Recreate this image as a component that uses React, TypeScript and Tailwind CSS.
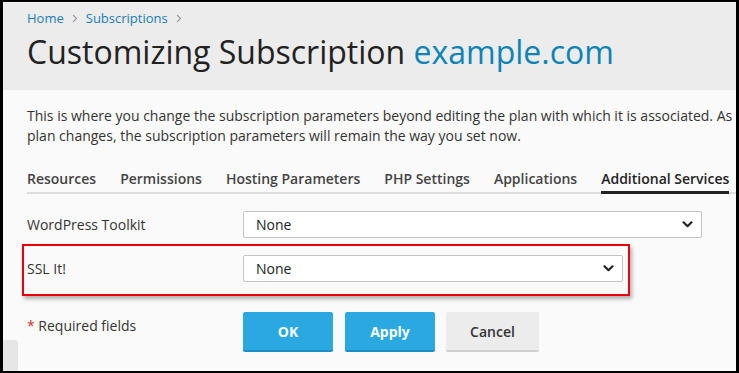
import React from "react";

const font = { fontFamily: '"Open Sans", "Noto Sans", Arial, sans-serif' };

const Chevron = () => (
  <svg width="11" height="7" viewBox="0 0 11 7" className="shrink-0">
    <path d="M1.5 1.3 L5.5 5.2 L9.5 1.3" fill="none" stroke="#222" strokeWidth="2.2" strokeLinecap="round" strokeLinejoin="round" />
  </svg>
);

const Crumb = () => (
  <svg width="6" height="9" viewBox="0 0 6 9" className="shrink-0">
    <path d="M1 1 L4.5 4.5 L1 8" fill="none" stroke="#9a9a9a" strokeWidth="1.1" />
  </svg>
);

const Select = ({ width }: { width: string }) => (
  <div
    className={`${width} h-[27px] flex items-center justify-between pl-[12px] pr-[8px] bg-white border border-[#c4c4c4] rounded-[2px] text-[14px] text-[#222]`}
  >
    <span>None</span>
    <Chevron />
  </div>
);

const tabs = [
  "Resources",
  "Permissions",
  "Hosting Parameters",
  "PHP Settings",
  "Applications",
  "Additional Services",
];

export default function App() {
  return (
    <div className="w-[739px] h-[373px] bg-black pt-[2px] pl-[3px] pr-[3px] pb-[2px]" style={font}>
      <div className="relative w-full h-full bg-[#fafafa] overflow-hidden">
        {/* Header */}
        <header className="h-[88px] bg-[#ececec] border-t border-[#f4f4f4] pl-[24px] pt-[6px]">
          <nav className="flex items-center text-[13px] leading-[18px]">
            <span className="text-[#1a7db8]">Home</span>
            <span className="mx-[8px] flex"><Crumb /></span>
            <span className="text-[#1a7db8]">Subscriptions</span>
            <span className="ml-[8px] flex"><Crumb /></span>
          </nav>
          <h1 className="mt-[3px] text-[32px] leading-[44px] text-[#222] whitespace-nowrap">
            Customizing Subscription <span className="text-[#0c84b5]">example.com</span>
          </h1>
        </header>

        {/* Content */}
        <div className="pl-[24px]">
          <p className="mt-[16px] text-[14px] leading-[20px] text-[#333] whitespace-nowrap">
            This is where you change the subscription parameters beyond editing the plan with which it is associated. As
            <br />
            plan changes, the subscription parameters will remain the way you set now.
          </p>

          {/* Tabs */}
          <div className="mt-[23px] flex gap-[24px] border-b-2 border-[#dddddd] whitespace-nowrap">
            {tabs.map((t, i) => (
              <div
                key={t}
                className={`pb-[2px] -mb-[2px] border-b-[3px] text-[14px] leading-[20px] font-semibold ${
                  i === tabs.length - 1 ? "border-[#222] text-[#222]" : "border-transparent text-[#444]"
                }`}
              >
                {t}
              </div>
            ))}
          </div>

          {/* Form */}
          <div className="mt-[17px] flex items-center">
            <label className="w-[216px] text-[14px] leading-[20px] text-[#333]">WordPress Toolkit</label>
            <Select width="w-[459px]" />
          </div>

          <div className="mt-[6px] -ml-[5px] w-[608px] border-2 border-[#e8000b] pl-[3px] pt-[9px] pb-[12px] shadow-[2px_3px_4px_rgba(0,0,0,0.3)] flex items-center">
            <label className="w-[216px] text-[14px] leading-[20px] text-[#333]">SSL It!</label>
            <Select width="w-[380px]" />
          </div>

          <div className="mt-[16px] flex items-start">
            <div className="w-[216px] pt-[4px] text-[14px] leading-[20px] text-[#333]">
              <span className="text-[#d9342b]">*</span> Required fields
            </div>
            <button className="w-[90px] h-[40px] rounded-[2px] bg-[#29a9df] border-b-2 border-[#1c8cc2] text-white text-[14px] font-bold">
              OK
            </button>
            <button className="ml-[12px] w-[90px] h-[40px] rounded-[2px] bg-[#29a9df] border-b-2 border-[#1c8cc2] text-white text-[14px] font-bold">
              Apply
            </button>
            <button className="ml-[11px] w-[93px] h-[40px] rounded-[2px] bg-[#ececec] border-b-2 border-[#cfcfcf] text-[#333] text-[14px] font-semibold">
              Cancel
            </button>
          </div>
        </div>

        {/* Side handle at bottom left */}
        <div className="absolute left-0 bottom-0 w-[15px] h-[31px] bg-[#e6e6e6] rounded-tr-[3px]" />
      </div>
    </div>
  );
}
